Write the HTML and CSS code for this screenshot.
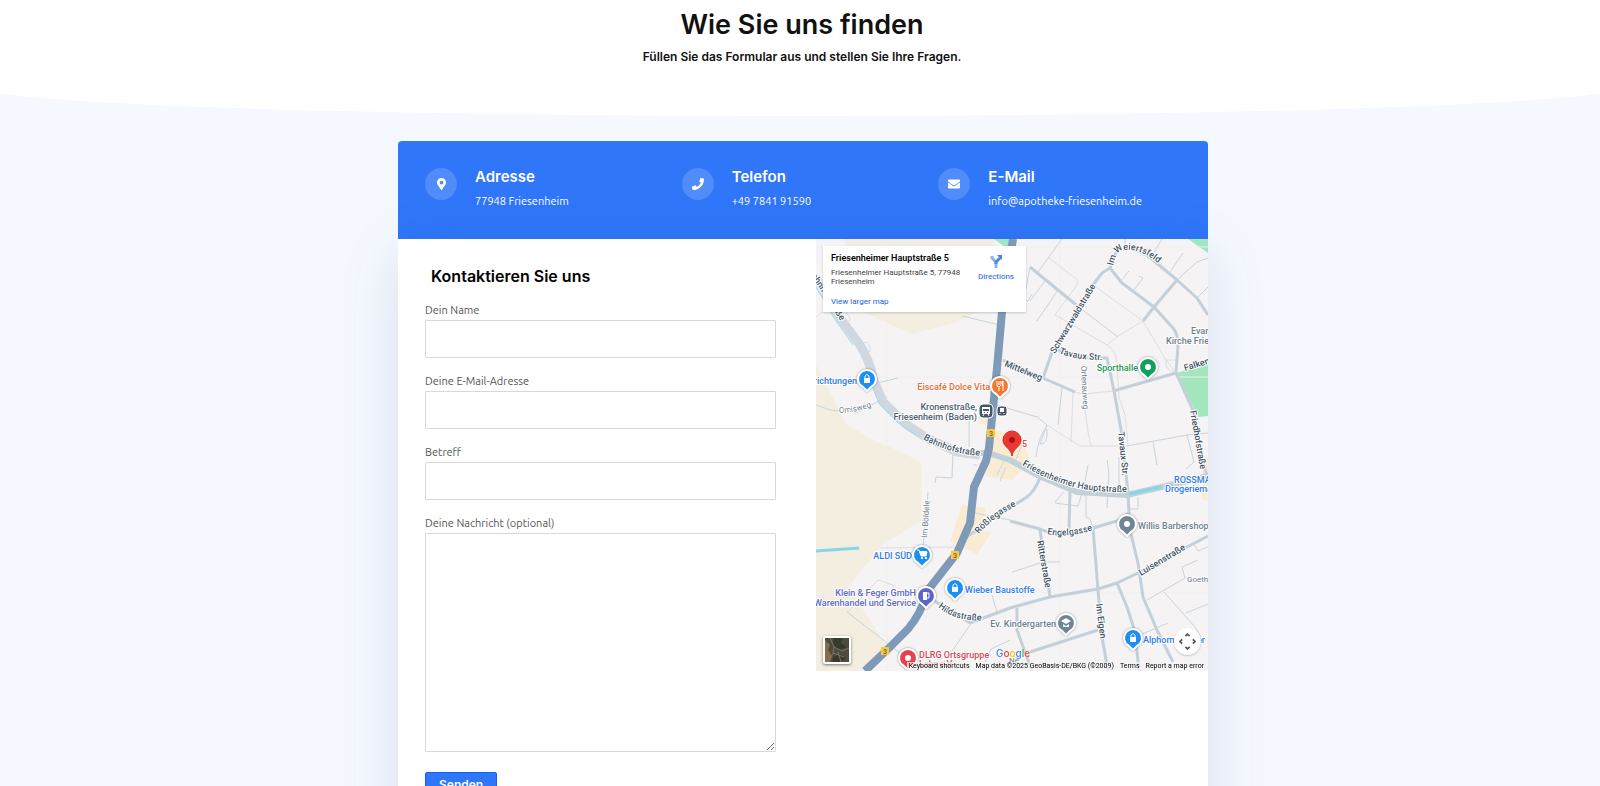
FILE: index.html
```
<!DOCTYPE html>
<html lang="de">
<head>
    <meta charset="UTF-8">
    <meta name="viewport" content="width=device-width, initial-scale=1">
    <title>Wie Sie uns finden</title>
    <link rel="stylesheet" href="styles.css">
</head>
<body>

    <!-- Intro -->
    <header class="intro">
        <h1>Wie Sie uns finden</h1>
        <p>Füllen Sie das Formular aus und stellen Sie Ihre Fragen.</p>
    </header>

    <main class="container">
        <!-- Contact details -->
        <section class="contact-bar">
            <div class="contact-item">
                <span class="contact-icon">
                    <svg width="9" height="12" viewBox="0 0 384 512"><path fill="#fff" d="M172 502C27 291 0 270 0 192a192 192 0 1 1 384 0c0 78-27 99-172 310-10 13-30 13-40 0zM192 272a80 80 0 1 0 0-160 80 80 0 0 0 0 160z"/></svg>
                </span>
                <div>
                    <h2>Adresse</h2>
                    <p>77948 Friesenheim</p>
                </div>
            </div>
            <div class="contact-item">
                <span class="contact-icon">
                    <svg width="12" height="12" viewBox="0 0 512 512"><path fill="#fff" d="M493 25 389 1c-11-3-23 3-27 14l-48 112c-4 10-2 21 7 28l60 50a371 371 0 0 1-177 177l-50-60c-7-9-18-11-28-7L14 363c-11 4-17 16-14 27l24 104c3 11 12 18 24 18 256 0 464-207 464-464 0-11-8-21-19-23z"/></svg>
                </span>
                <div>
                    <h2>Telefon</h2>
                    <p>+49 7841 91590</p>
                </div>
            </div>
            <div class="contact-item">
                <span class="contact-icon">
                    <svg width="12" height="12" viewBox="0 0 512 512"><path fill="#fff" d="M502 191c4-3 10 0 10 5v204c0 27-21 48-48 48H48c-27 0-48-21-48-48V196c0-5 6-8 10-5 22 17 52 40 154 114 21 15 57 48 92 47 35 1 72-32 92-47 102-74 132-97 154-114zM256 320c23 0 57-29 74-42 133-96 143-105 173-128 6-5 9-12 9-19v-19c0-27-21-48-48-48H48c-27 0-48 21-48 48v19c0 7 3 14 9 19 30 23 40 32 173 128 17 13 51 42 74 42z"/></svg>
                </span>
                <div>
                    <h2>E-Mail</h2>
                    <p>info@apotheke-friesenheim.de</p>
                </div>
            </div>
        </section>

        <section class="card">
            <!-- Form -->
            <form class="contact-form">
                <h2>Kontaktieren Sie uns</h2>
                <label for="name">Dein Name</label>
                <input id="name" type="text">
                <label for="email">Deine E-Mail-Adresse</label>
                <input id="email" type="email">
                <label for="subject">Betreff</label>
                <input id="subject" type="text">
                <label for="message">Deine Nachricht (optional)</label>
                <textarea id="message"></textarea>
                <button type="submit">Senden</button>
            </form>

            <!-- Map -->
            <div class="map">
                <svg class="map-canvas" viewBox="0 0 392 432" preserveAspectRatio="xMidYMid slice">
                    <defs>
                        <path id="pin" d="M0 12-4 8A9 9 0 1 1 4 8z"/>
                        <path id="p-weiert" d="M297 27Q301 9 309 11Q327 9 350 31"/>
                        <path id="p-bahnhof" d="M107 200Q134 216 170 217"/>
                        <path id="p-haupt" d="M206 226Q232 242 262 249Q285 254 320 253"/>
                        <path id="p-tavaux" d="M243 114Q260 122 295 121"/>
                        <path id="p-rossle" d="M163 295Q174 280 207 263"/>
                        <path id="p-engel" d="M231 295Q254 300 286 288"/>
                        <path id="p-hilda" d="M122 368Q140 384 174 381"/>
                        <path id="p-omis" d="M23 174Q40 174 64 165"/>
                    </defs>

                    <!-- areas -->
                    <rect width="392" height="432" fill="#f5f3f3"/>
                    <path class="field" d="M28 0H180L161 73 141 83 96 95 47 73zM0 126 31 186 61 203 81 211 105 223 106 281 66 306 32 348 54 381 72 411 44 432H0z"/>
                    <path class="built" d="M146 265 170 269 164 290 175 294 161 315 134 303zM178 191 206 198 214 223 196 241 170 237zM386 218H392V262L386 260zM164 176 172 178 170 186 162 184z"/>
                    <path class="park" d="M178 0H201L196 13zM372 0H392V14zM361 134 392 124V177L382 178z"/>
                    <path d="M71 0V432M244 0V432M0 138H392M0 354H392M0 8H392" stroke="#f0eeee"/>

                    <!-- small streets -->
                    <g class="path">
                        <path d="M277 46 327 82 302 97 291 106 239 76 261 46Q262 40 259 39L233 19"/>
                        <path d="M291 106Q300 110 301 126L303 158 309 176 312 207M327 82 350 121 360 134M350 121Q348 132 361 134M350 121H361"/>
                        <path d="M259 153 267 155 297 152M257 153 255 203M267 155 272 193 275 208M231 186 264 207 311 207"/>
                        <path d="M32 373 62 341 77 346 78 354M64 309 141 308M24 68Q40 82 30 82M44 108Q50 98 54 108V113M0 78 10 70"/>
                    </g>
                    <g class="street">
                        <path d="M264 69 302 98M242 51 221 82M246 0 222 33M309 8V0M337 15 346 0M354 33 367 14M361 41 381 23 392 19M381 59 392 48M306 41 313 32M318 51 327 39 323 37"/>
                        <path d="M214 28 208 60 212 62 216 55M229 42 214 62M246 149 242 186M220 177 231 186 224 205Q232 206 231 190M311 207 371 196 392 194M337 203 341 226M371 196 378 223 370 230"/>
                        <path d="M181 166 221 178M231 186Q222 200 220 218M206 206 200 220M188 222 181 236M270 254V278L274 280 277 289M272 226 268 248 262 267 239 264M291 221 293 235 291 269M248 253 239 263M303 218V248M313 270H322V258"/>
                        <path d="M112 253 107 308M137 211 136 239 120 238 119 244M31 373 84 414 100 432M154 273 194 281M161 226 157 226M153 179V208M146 77 184 86M61 144 82 139M0 166 14 171 40 174 71 158"/>
                        <path d="M154 386 132 418 120 432M154 386 157 374M176 356 181 373M196 333 227 323 244 323M194 401 175 410 165 432M331 361 369 339 366 328 382 321M348 353 379 388 385 398M370 374 392 365M324 396 352 384M378 305 382 312 392 308M184 242 190 228"/>
                    </g>

                    <!-- wider roads -->
                    <path class="road" d="M214 28 242 51 264 69M227 139 236 113 277 46 286 34 294 29 301 11M309 8Q327 12 337 21L361 41 381 59 392 76M294 29 306 44 338 68 357 89Q362 95 362 106L360 134 297 152M361 41 338 68 327 82M242 111 262 119H291L298 152 306 196 312 254 313 274 314 291 322 324 327 358 341 391 357 423"/>
                    <path class="road" d="M187 121 227 139 259 153M360 134 376 169 384 213 392 240M194 282 224 290Q242 298 254 294L277 289 301 282 313 274M149 299 161 291 194 269 211 258Q218 253 224 239M254 251 253 293M277 289 282 351 286 398 292 432M154 384 194 369 234 358 282 350 301 344 322 334 371 308 392 297M224 291 234 358M301 344 311 368 319 393 323 432M214 413 282 391M201 369V391L216 432M117 361 154 384"/>
                    <path class="rail" d="M0 39 24 79 44 106Q54 122 57 139L67 163 91 186 111 199 141 213 164 216"/>
                    <path class="road road-wide" d="M152 214 172 214 194 221 221 236 261 253 311 256 354 246 392 237"/>
                    <path class="water" d="M0 48 18 79 37 106M56 146 63 164 80 182 100 196M182 218 202 227"/>
                    <path class="stream" d="M0 312 43 309M313 255 345 248"/>
                    <path class="highway" d="M197 0 186 73 181 129 173 209 170 222 158 248 154 284 141 314 112 351Q105 375 92 390L74 408 49 432"/>

                    <!-- road numbers -->
                    <g class="shield">
                        <path d="M171 190h8v8h-8zM135 312h8v8h-8zM65 408h8v8h-8z"/>
                        <text x="175" y="197">3</text>
                        <text x="139" y="319">3</text>
                        <text x="69" y="415">3</text>
                    </g>

                    <!-- street names -->
                    <g class="name">
                        <text><textPath href="#p-weiert">Im Weiertsfeld</textPath></text>
                        <text><textPath href="#p-bahnhof">Bahnhofstraße</textPath></text>
                        <text><textPath href="#p-haupt">Friesenheimer Hauptstraße</textPath></text>
                        <text><textPath href="#p-tavaux">Tavaux Str.</textPath></text>
                        <text><textPath href="#p-rossle">Rößlegasse</textPath></text>
                        <text><textPath href="#p-engel">Engelgasse</textPath></text>
                        <text><textPath href="#p-hilda">Hildastraße</textPath></text>
                        <text transform="translate(239 115) rotate(-59)">Schwarzwaldstraße</text>
                        <text transform="translate(188 127) rotate(22)">Mittelweg</text>
                        <text transform="translate(302 193) rotate(84)">Tavaux Str.</text>
                        <text transform="translate(374 172) rotate(80)">Friedhofstraße</text>
                        <text transform="translate(369 132) rotate(-17)">Falkenstraße</text>
                        <text transform="translate(221 302) rotate(80)">Ritterstraße</text>
                        <text transform="translate(325 337) rotate(-31)">Luisenstraße</text>
                        <text transform="translate(280 365) rotate(83)">Im Eigen</text>
                        <text transform="translate(-8 32) rotate(57)">Bahnhofstraße</text>
                    </g>
                    <g class="name name-minor">
                        <text><textPath href="#p-omis">Omisweg</textPath></text>
                        <text transform="translate(265 127) rotate(87)">Ortenauweg</text>
                        <text transform="translate(111 299) rotate(-86)">Im Böldele</text>
                        <text x="371" y="343">Goethestraße</text>
                        <text x="193" y="424">Ne</text>
                    </g>

                    <!-- places -->
                    <g class="place">
                        <text class="blue" x="41" y="145" text-anchor="end">Einrichtungen</text>
                        <text class="orange" x="174" y="151" text-anchor="end">Eiscafé Dolce Vita</text>
                        <text class="slate" x="161" y="171" text-anchor="end">Kronenstraße,</text>
                        <text class="slate" x="161" y="181" text-anchor="end">Friesenheim (Baden)</text>
                        <text class="green" x="322" y="132" text-anchor="end">Sporthalle</text>
                        <text class="grey" x="375" y="95">Evangelische</text>
                        <text class="grey" x="350" y="105">Kirche Friesenheim</text>
                        <text class="blue" x="358" y="244">ROSSMANN</text>
                        <text class="blue" x="349" y="253">Drogeriemarkt</text>
                        <text class="grey" x="322" y="290">Willis Barbershop</text>
                        <text class="blue" x="96" y="320" text-anchor="end">ALDI SÜD</text>
                        <text class="blue" x="149" y="354">Wieber Baustoffe</text>
                        <text class="purple" x="100" y="357" text-anchor="end">Klein &amp; Feger GmbH</text>
                        <text class="purple" x="100" y="367" text-anchor="end">Warenhandel und Service</text>
                        <text class="grey" x="240" y="388" text-anchor="end">Ev. Kindergarten</text>
                        <text class="blue" x="327" y="404">Alphornmacher</text>
                        <text class="red" x="103" y="419">DLRG Ortsgruppe</text>
                        <text class="red" x="103" y="428">Lahr e.V.</text>
                        <text class="red" x="206" y="208">5</text>
                    </g>

                    <!-- markers -->
                    <g class="markers">
                        <use href="#pin" x="51" y="140" fill="#1a8ff5"/>
                        <use href="#pin" x="184" y="147" fill="#f5762c"/>
                        <use href="#pin" x="332" y="128" fill="#12a05c"/>
                        <use href="#pin" x="106" y="316" fill="#1a8ff5"/>
                        <use href="#pin" x="139" y="349" fill="#1a8ff5"/>
                        <use href="#pin" x="110" y="357" fill="#5b66c8"/>
                        <use href="#pin" x="250" y="384" fill="#6f8494"/>
                        <use href="#pin" x="311" y="285" fill="#6f8494"/>
                        <use href="#pin" x="317" y="399" fill="#1a8ff5"/>
                        <use href="#pin" x="92" y="419" fill="#e8414b"/>
                    </g>
                    <g fill="#fff">
                        <path d="M48 139h6v5h-6zM136 348h6v5h-6zM314 398h6v5h-6z"/>
                        <path d="M49 139v-2q2-3 4 0v2M137 348v-2q2-3 4 0v2M315 398v-2q2-3 4 0v2" fill="none" stroke="#fff"/>
                        <path d="M181 142v4q0 2 2 2v4M183 142v4M185 142v4l-2 2M187 152v-10q-2 2 0 5" fill="none" stroke="#fff"/>
                        <circle cx="332" cy="128" r="3"/>
                        <circle cx="311" cy="285" r="3"/>
                        <circle cx="92" cy="419" r="3"/>
                        <path d="M101 311h2l2 6h5l1-4h-8" fill="none" stroke="#fff"/>
                        <path d="M103 312h8l-1 5h-5zM105 318h2v2h-2zM109 318h2v2h-2z"/>
                        <path d="M107 353h4v8h-4z"/>
                        <path d="M111 354h2v5h-2" fill="none" stroke="#fff"/>
                        <path d="m245 382 5-3 5 3-5 3zM247 385v3h6v-3l-3 2z"/>
                    </g>

                    <!-- station -->
                    <g fill="#435768" stroke="#fff">
                        <rect x="163" y="165" width="14" height="14" rx="4"/>
                        <rect x="181" y="167" width="10" height="10" rx="3"/>
                    </g>
                    <path d="M166 168h8v7h-8zM184 169h4v4h-4z" fill="#fff"/>
                    <path d="M167 170h6v2h-6zM168 173h1v1h-1zM171 173h1v1h-1z" fill="#435768"/>
                    <path d="M168 175 167 177M172 175 173 177M184 174v1M188 174v1" stroke="#fff"/>

                    <!-- pharmacy -->
                    <path d="M196 217C195 209 187 208 187 201A9 9 0 0 1 205 201C205 208 197 209 196 217z" fill="#ea3834" stroke="#d22a24"/>
                    <circle cx="196" cy="201" r="3" fill="#a51512"/>
                </svg>

                <div class="map-info">
                    <div>
                        <strong>Friesenheimer Hauptstraße 5</strong>
                        <p>Friesenheimer Hauptstraße 5, 77948 Friesenheim</p>
                        <a href="#">View larger map</a>
                    </div>
                    <a class="directions" href="#">
                        <svg width="14" height="14" viewBox="0 0 14 14"><path d="M3 1v2l4 4v6" fill="none" stroke="#8ab4f0" stroke-width="3"/><path d="M7 9V7l4-4" fill="none" stroke="#4a8be0" stroke-width="3"/><path d="M8 0h5v5z" fill="#3f7fd8"/></svg>
                        Directions
                    </a>
                </div>

                <button class="satellite" type="button" aria-label="Show satellite imagery">
                    <svg width="24" height="24" viewBox="0 0 24 24"><path fill="#4d4b3d" d="M0 0h24v24H0z"/><path fill="#8b6c49" d="M0 2 5 7 3 12 7 18 5 24H0z"/><path fill="#343b2b" d="M9 0h9l-2 5 6 4-8 3-6-5zM8 19l7-3 6 4-5 4H8z"/><path d="M5 0 9 9 8 15 3 24M9 9l8 4 7-3M13 14l3 10M8 15l11 4" fill="none" stroke="#7a7568"/></svg>
                </button>
                <button class="camera" type="button" aria-label="Map camera controls">
                    <svg width="17" height="17" viewBox="0 0 16 16"><path d="M6 3 8 1l2 2M6 13l2 2 2-2M3 6 1 8l2 2M13 6l2 2-2 2" fill="none" stroke="#555" stroke-width="1.6"/></svg>
                </button>
                <div class="google"><b class="g-blue">G</b><b class="g-red">o</b><b class="g-yellow">o</b><b class="g-blue">g</b><b class="g-green">l</b><b class="g-red">e</b></div>
                <div class="map-footer">
                    <span>Keyboard shortcuts</span>
                    <span>Map data ©2025 GeoBasis-DE/BKG (©2009)</span>
                    <a href="#">Terms</a>
                    <a href="#">Report a map error</a>
                </div>
            </div>
        </section>
    </main>

</body>
</html>
```

FILE: styles.css
```
* {
    box-sizing: border-box;
}

body {
    margin: 0;
    background-color: #f5f9ff;
    color: #111;
    font-family: Ubuntu, "Noto Sans", sans-serif;
    font-size: 11px;
    line-height: 16px;
    overflow-x: hidden;
}

h1, h2, p {
    margin: 0;
}

h1, h2 {
    font-family: Inter, sans-serif;
    font-weight: 600;
}

/* Intro, wider than the page so the curve is cut off at the sides */
.intro {
    margin: 0 -20px;
    padding: 9px 4px 51px 8px;
    background-color: #fff;
    border-radius: 0 0 50% 50% / 0 0 29px 29px;
    text-align: center;
}

.intro h1 {
    font-size: 27px;
    line-height: 32px;
}

.intro p {
    margin-top: 8px;
    font-family: Inter, sans-serif;
    font-size: 12px;
    font-weight: 600;
}

.container {
    max-width: 816px;
    margin: 25px auto 0;
    padding-left: 6px;
}

/* Contact details */
.contact-bar {
    display: grid;
    grid-template-columns: repeat(3, 1fr);
    padding: 27px 13px 27px 27px;
    background-color: #2f76f9;
    border-radius: 4px 4px 0 0;
    color: #fff;
}

.contact-item {
    display: flex;
    gap: 18px;
}

.contact-icon {
    display: flex;
    flex: none;
    align-items: center;
    justify-content: center;
    width: 32px;
    height: 32px;
    border-radius: 50%;
    background-color: rgba(255, 255, 255, 0.16);
}

.contact-item h2 {
    font-size: 15px;
    line-height: 18px;
}

.contact-item p {
    margin-top: 7px;
    padding-bottom: 3px;
}

/* Form and map */
.card {
    display: grid;
    grid-template-columns: 418fr 392fr;
    align-items: start;
    background-color: #fff;
    box-shadow: 0 14px 56px rgba(20, 45, 100, 0.13);
}

.contact-form {
    display: flex;
    flex-direction: column;
    align-items: stretch;
    padding: 27px 40px 40px 27px;
}

.contact-form h2 {
    margin: 0 0 16px 6px;
    color: #000;
    font-size: 16px;
    line-height: 20px;
}

.contact-form label {
    margin-bottom: 2px;
    color: #555;
}

.contact-form input,
.contact-form textarea {
    width: 100%;
    height: 38px;
    margin: 0 0 15px;
    padding: 8px;
    border: 1px solid #d8d8d8;
    border-radius: 1px;
    background-color: #fff;
    font: inherit;
}

.contact-form textarea {
    height: 219px;
    margin-bottom: 20px;
    resize: vertical;
}

.contact-form button {
    align-self: flex-start;
    padding: 4px 13px;
    border: 1px solid #0f62fe;
    border-radius: 2px;
    background-color: #2f76f9;
    color: #fff;
    font: 600 12px/16px Inter, sans-serif;
}

.map {
    position: relative;
    height: 432px;
    overflow: hidden;
    font-family: Roboto, sans-serif;
}

.map-canvas {
    display: block;
    width: 100%;
    height: 100%;
}

.field { fill: #f4eee1; }
.built { fill: #faebd3; }
.park { fill: #a3e5bd; }

.path, .street, .road, .rail, .highway, .water, .stream {
    fill: none;
    stroke-linejoin: round;
}

.path { stroke: #dcdfe1; stroke-width: 1px; }
.street { stroke: #c8d4dc; stroke-width: 1px; }
.road { stroke: #c3d0d9; stroke-width: 3px; }
.road-wide { stroke-width: 6px; }
.rail { stroke: #cfd8e0; stroke-width: 9px; }
.highway { stroke: #7f9ab8; stroke-width: 8px; }
.water { stroke: #9adcf0; stroke-width: 1px; }
.stream { stroke: #86d5ea; stroke-width: 3px; }

.shield { fill: #f9cb3c; }

.shield text {
    fill: #444;
    font-size: 7px;
    text-anchor: middle;
}

.name text, .place text {
    paint-order: stroke;
    stroke: #fff;
    stroke-width: 2px;
    stroke-linejoin: round;
}

.name text {
    fill: #405264;
    font-size: 9px;
    font-weight: 500;
}

.name .name-minor text,
.name-minor text {
    fill: #6c7a86;
    font-size: 8px;
    font-weight: 400;
}

.place text {
    font-size: 9px;
    font-weight: 500;
}

.place .blue { fill: #2f7ce4; }
.place .orange { fill: #e66b35; }
.place .slate { fill: #4c6072; }
.place .green { fill: #1f9459; }
.place .grey { fill: #6b7f8d; }
.place .purple { fill: #5f6ac4; }
.place .red { fill: #dd4350; }

.markers {
    stroke: #fff;
    stroke-width: 2px;
    stroke-linejoin: round;
    filter: drop-shadow(0 0 1px rgba(0, 0, 0, 0.4));
}

/* Map overlays */
.map-info {
    position: absolute;
    top: 7px;
    left: 7px;
    display: flex;
    justify-content: space-between;
    width: 203px;
    height: 66px;
    padding: 6px 12px 6px 8px;
    background-color: #fff;
    box-shadow: 0 1px 2px rgba(0, 0, 0, 0.2);
    color: #444;
    font-size: 8px;
    line-height: 9px;
}

.map-info strong {
    display: block;
    color: #000;
    font-size: 9px;
    font-weight: 600;
    line-height: 12px;
    white-space: nowrap;
}

.map-info p {
    width: 134px;
    margin: 4px 0 11px;
}

.map-info a {
    color: #1763d8;
    text-decoration: none;
}

.map-info .directions {
    display: flex;
    flex-direction: column;
    align-items: center;
    gap: 3px;
    padding-top: 3px;
}

.satellite {
    position: absolute;
    left: 7px;
    bottom: 7px;
    width: 28px;
    height: 28px;
    padding: 0;
    border: 2px solid #fff;
    border-radius: 2px;
    box-shadow: 0 1px 3px rgba(0, 0, 0, 0.5);
}

.satellite svg, .camera svg {
    display: block;
}

.camera {
    position: absolute;
    right: 7px;
    bottom: 16px;
    width: 27px;
    height: 27px;
    padding: 5px;
    border: 0;
    border-radius: 50%;
    background-color: #fff;
    box-shadow: 0 1px 2px rgba(0, 0, 0, 0.2);
}

.google {
    position: absolute;
    left: 180px;
    bottom: 11px;
    font-family: Inter, sans-serif;
    font-size: 10px;
    line-height: 14px;
    text-shadow: 0 0 2px #fff;
}

.google b { font-weight: 500; }
.g-blue { color: #4285f4; }
.g-red { color: #ea4335; }
.g-yellow { color: #fbbc05; }
.g-green { color: #34a853; }

.map-footer {
    position: absolute;
    right: 0;
    bottom: 0;
    display: flex;
    gap: 6px;
    padding: 0 4px 0 2px;
    background-color: rgba(245, 245, 245, 0.7);
    color: #000;
    font-size: 7px;
    line-height: 9px;
    white-space: nowrap;
}

.map-footer a {
    color: #000;
    text-decoration: none;
}
```
